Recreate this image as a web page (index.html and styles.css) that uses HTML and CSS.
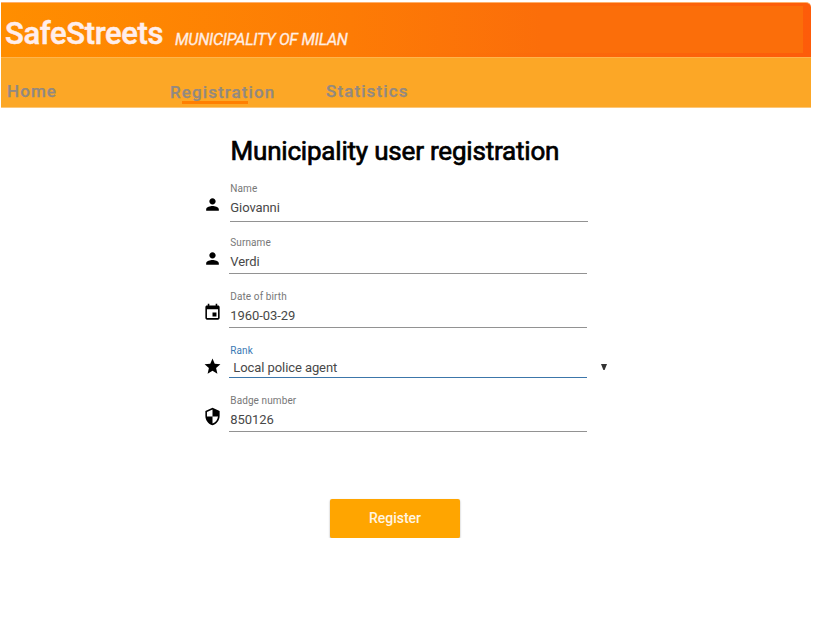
FILE: index.html
```
<!DOCTYPE html>
<html lang="en">
<head>
<meta charset="utf-8">
<title>SafeStreets</title>
<link rel="stylesheet" href="styles.css">
</head>
<body>
<header class="top">
  <div class="brand-bar">
    <div class="brand-inner">
      <span class="brand">SafeStreets</span>
      <span class="subtitle">MUNICIPALITY OF MILAN</span>
    </div>
  </div>
  <nav class="nav">
    <a class="nav-home">Home</a>
    <a class="nav-registration">Registration</a>
    <a class="nav-statistics">Statistics</a>
  </nav>
</header>
<main class="form">
  <h1><span>Municipality user registration</span></h1>
  <div class="row name">
    <svg class="icon" viewBox="0 0 24 24"><path d="M12 12c2.21 0 4-1.79 4-4s-1.79-4-4-4-4 1.79-4 4 1.79 4 4 4zm0 2c-2.67 0-8 1.34-8 4v2h16v-2c0-2.66-5.33-4-8-4z"/></svg>
    <div class="field"><label>Name</label><div class="value">Giovanni</div></div>
  </div>
  <div class="row surname">
    <svg class="icon" viewBox="0 0 24 24"><path d="M12 12c2.21 0 4-1.79 4-4s-1.79-4-4-4-4 1.79-4 4 1.79 4 4 4zm0 2c-2.67 0-8 1.34-8 4v2h16v-2c0-2.66-5.33-4-8-4z"/></svg>
    <div class="field"><label>Surname</label><div class="value">Verdi</div></div>
  </div>
  <div class="row birth">
    <svg class="icon" viewBox="0 0 24 24"><path d="M17 12h-5v5h5v-5zM16 1v2H8V1H6v2H5c-1.11 0-1.99.9-1.99 2L3 19c0 1.1.89 2 2 2h14c1.1 0 2-.9 2-2V5c0-1.1-.9-2-2-2h-1V1h-2zm3 18H5V8h14v11z"/></svg>
    <div class="field"><label>Date of birth</label><div class="value">1960-03-29</div></div>
  </div>
  <div class="row rank">
    <svg class="icon" viewBox="0 0 24 24"><path d="M12 17.27L18.18 21l-1.64-7.03L22 9.24l-7.19-.61L12 2 9.19 8.63 2 9.24l5.46 4.73L5.82 21z"/></svg>
    <div class="field"><label>Rank</label><div class="value">Local police agent</div></div>
    <svg class="caret" viewBox="0 0 6 6"><path d="M0 0h6L3.6 6H2.4z"/></svg>
  </div>
  <div class="row badge">
    <svg class="icon" viewBox="0 0 24 24"><path d="M12 1L3 5v6c0 5.55 3.84 10.74 9 12 5.16-1.26 9-6.45 9-12V5l-9-4zm0 10.99h7c-.53 4.12-3.28 7.79-7 8.94V12H5V6.3l7-3.11v8.8z"/></svg>
    <div class="field"><label>Badge number</label><div class="value">850126</div></div>
  </div>
  <button class="register">Register</button>
</main>
</body>
</html>
```
FILE: styles.css
```
* { box-sizing: border-box; }
body {
  margin: 0;
  background: #fff;
  font-family: Roboto, "Liberation Sans", sans-serif;
}
.top { width: 810px; margin: 2px 0 0 1px; }
.brand-bar {
  height: 55px;
  padding: 3px 8px 4px 0;
  border-top: 1px solid #ffb06b;
  border-radius: 0 5px 0 0;
  background: linear-gradient(90deg, #ff8e00 0, #fd7b05 350px, #fb6b0a 540px, #fd5c0a 100%);
}
.brand-inner {
  display: flex;
  align-items: baseline;
  height: 47px;
  padding: 4px 0 0 4px;
  background: linear-gradient(90deg, #ff8e00 0, #fd7b05 350px, #fb6e0a 540px, #fb6e0a 100%);
  line-height: 48px;
  white-space: nowrap;
}
.brand { width: 170px; color: #ffeeec; font-size: 31px; font-weight: 500; letter-spacing: -.35px; -webkit-text-stroke: .5px #ffeeec; }
.subtitle {
  position: relative;
  top: 1px;
  color: #ffeee4;
  font-size: 16px;
  font-style: italic;
  font-weight: 400;
  letter-spacing: -.24px;
  -webkit-text-stroke: .3px #ffeee4;
}
.nav {
  display: flex;
  height: 51px;
  padding: 23px 0 0 6px;
  border-top: 1px solid #ffb44c;
  border-bottom: 1px solid #fdc778;
  background: #fca726;
  color: #928981;
  font-size: 17px;
  font-weight: 500;
  line-height: 20px;
  letter-spacing: 1.1px;
  -webkit-text-stroke: .25px #928981;
}
.nav-home { width: 163px; }
.nav-registration { position: relative; width: 156px; padding-top: 1px; }
.nav-registration::after {
  content: "";
  position: absolute;
  left: 12px;
  top: 20px;
  width: 66px;
  height: 3px;
  background: #ff7f00;
}
.form { width: 420px; margin-left: 204px; }
h1 {
  height: 73px;
  margin: 0;
  padding: 27px 0 0 26.5px;
  color: #000;
  font-size: 26px;
  font-weight: 400;
  line-height: 32px;
  letter-spacing: -.2px;
  white-space: nowrap;
  -webkit-text-stroke: .7px #000;
}
.row { display: flex; }
.icon { width: 19px; height: 19px; margin: 14px 7px 0 -1px; fill: #000; }
.field { width: 358px; height: 100%; border-bottom: 1px solid #929292; padding-left: 1.3px; }
.name { height: 41px; margin-bottom: 13px; }
.name .field { margin-left: 1px; padding-left: .3px; }
.surname { height: 39px; margin-bottom: 15px; }
.birth { height: 39px; margin-bottom: 15px; }
.rank { height: 35px; margin-bottom: 15px; }
.badge { height: 39px; }
label { display: block; height: 17px; color: #777; font-size: 10px; line-height: 16px; letter-spacing: .1px; }
.value { color: #484848; font-size: 13px; line-height: 20px; letter-spacing: -.08px; }
.rank label { height: 15px; color: #3978b4; }
.rank .value { padding-left: 3px; }
.rank .field { border-color: #3c76aa; }
.caret { width: 6px; height: 6px; margin: 21px 0 0 14px; fill: #333; }
.register {
  display: block;
  width: 130px;
  height: 39px;
  margin: 67px 0 0 126px;
  padding: 0;
  border: 0;
  border-radius: 2px;
  background: #ffa500;
  box-shadow: 0 1px 2px rgba(0, 0, 0, .35);
  color: #fff5e3;
  font: 500 14px/39px Roboto, sans-serif;
}
```
